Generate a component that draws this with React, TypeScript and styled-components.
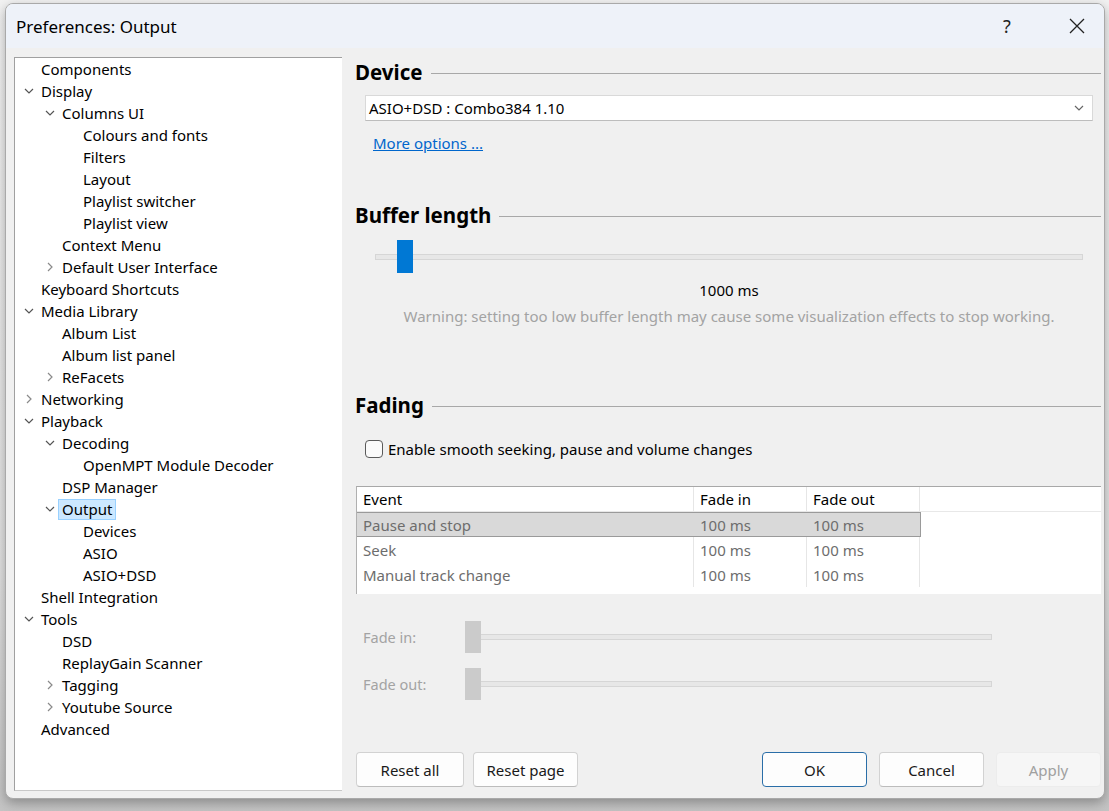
import styled, { createGlobalStyle } from "styled-components";

const GlobalStyle = createGlobalStyle`
  html, body {
    margin: 0;
    padding: 0;
    background: #e6e6e6;
  }
  body {
    font-family: "Noto Sans", "Open Sans", sans-serif;
    color: #000;
  }
`;

const Page = styled.div`
  width: 1109px;
  height: 811px;
  box-sizing: border-box;
  padding: 3px 4px 14px 5px;
  overflow: hidden;
  background: linear-gradient(#f2f2f2, #e2e2e2 70%, #c4c4c4);
`;

const Window = styled.div`
  height: 100%;
  display: flex;
  flex-direction: column;
  background: #f0f0f0;
  border: 1px solid #a9a9a9;
  border-radius: 8px;
  overflow: hidden;
  box-shadow: 0 4px 12px rgba(0, 0, 0, 0.3);
`;

const TitleBar = styled.div`
  height: 44px;
  flex: none;
  display: flex;
  align-items: center;
  background: #eef2f9;
  padding-left: 10px;
`;

const Title = styled.div`
  flex: 1;
  font-size: 17px;
`;

const TitleButton = styled.div<{ $w: number }>`
  width: ${(p) => p.$w}px;
  height: 44px;
  display: flex;
  align-items: center;
  justify-content: center;
  font-size: 18px;
  color: #222;
`;

const Body = styled.div`
  flex: 1;
  display: flex;
  padding: 9px 0 7px 8px;
  min-height: 0;
`;

const Tree = styled.div`
  width: 327px;
  flex: none;
  background: #fff;
  border-left: 1px solid #a0a0a0;
  border-top: 1px solid #a0a0a0;
  border-bottom: 1px solid #c8c8c8;
  font-size: 15px;
`;

const TreeRow = styled.div<{ $level: number }>`
  height: 22px;
  display: flex;
  align-items: center;
  padding-left: ${(p) => 8 + p.$level * 21}px;
  white-space: nowrap;
`;

const Expander = styled.span`
  width: 12px;
  margin-right: 6px;
  display: flex;
  align-items: center;
  justify-content: center;
`;

const Label = styled.span<{ $selected?: boolean }>`
  ${(p) =>
    p.$selected
      ? `background: #cce8ff; border: 1px solid #99d1ff; padding: 0 3px; margin-left: -4px; line-height: 19px;`
      : ``}
`;

const Content = styled.div`
  flex: 1;
  display: flex;
  flex-direction: column;
  padding-left: 13px;
  padding-right: 3px;
`;

const Heading = styled.div<{ $top: number }>`
  margin-top: ${(p) => p.$top}px;
  height: 26px;
  display: flex;
  align-items: center;
  gap: 8px;
  font-weight: 700;
  font-size: 20.5px;
  &::after {
    content: "";
    flex: 1;
    height: 1px;
    background: #a8a8a8;
    margin-top: 2px;
  }
`;

const Select = styled.div`
  margin: 10px 8px 0 10px;
  height: 26px;
  box-sizing: border-box;
  display: flex;
  align-items: center;
  justify-content: space-between;
  padding: 0 8px 0 3px;
  background: #fff;
  border: 1px solid #d9d9d9;
  border-bottom-color: #bdbdbd;
  font-size: 15px;
`;

const Link = styled.a`
  margin: 12px 0 0 18px;
  height: 20px;
  line-height: 20px;
  color: #0066cc;
  text-decoration: underline;
  font-size: 15px;
  align-self: flex-start;
`;

const SliderWrap = styled.div<{ $top: number }>`
  margin: ${(p) => p.$top}px 18px 0 20px;
  height: 33px;
  position: relative;
  display: flex;
  align-items: center;
`;

const Track = styled.div`
  flex: 1;
  height: 6px;
  box-sizing: border-box;
  background: #e7e7e7;
  border: 1px solid #d6d6d6;
`;

const Thumb = styled.div<{ $color: string; $h: number }>`
  position: absolute;
  top: 0;
  width: 16px;
  height: ${(p) => p.$h}px;
  background: ${(p) => p.$color};
`;

const Value = styled.div`
  margin: 7px 18px 0 20px;
  height: 20px;
  line-height: 20px;
  text-align: center;
  font-size: 15px;
`;

const Warning = styled.div`
  margin: 6px 18px 0 20px;
  height: 20px;
  line-height: 20px;
  text-align: center;
  font-size: 15px;
  color: #a3a3a3;
  white-space: nowrap;
`;

const CheckRow = styled.label`
  margin: 21px 0 0 10px;
  height: 20px;
  display: flex;
  align-items: center;
  gap: 5px;
  font-size: 15px;
`;

const CheckBox = styled.span`
  width: 18px;
  height: 18px;
  box-sizing: border-box;
  border: 1px solid #5a5a5a;
  border-radius: 4px;
  background: #fafafa;
`;

const Table = styled.div`
  margin: 27px 0 0 1px;
  height: 107px;
  background: #fff;
  border-top: 1px solid #a8a8a8;
  border-left: 1px solid #b0b0b0;
  font-size: 15px;
`;

const Row = styled.div<{ $head?: boolean }>`
  height: 25px;
  box-sizing: border-box;
  display: grid;
  grid-template-columns: 337px 113px 113px 1fr;
  color: ${(p) => (p.$head ? "#000" : "#6d6d6d")};
  border-bottom: ${(p) => (p.$head ? "1px solid #e8e8e8" : "none")};
`;

const Cell = styled.div<{ $selected?: boolean; $last?: boolean }>`
  display: flex;
  align-items: center;
  padding-left: 6px;
  border-right: ${(p) => (p.$last ? "none" : "1px solid #e6e6e6")};
  white-space: nowrap;
  ${(p) =>
    p.$selected
      ? `background: #d9d9d9; border-right: none; border-top: 1px solid #9a9a9a; border-bottom: 1px solid #9a9a9a;`
      : ``}
`;

const SelEnd = styled.div`
  border-left: 1px solid #9a9a9a;
`;

const FadeRow = styled.div<{ $top: number }>`
  margin: ${(p) => p.$top}px 0 0 8px;
  height: 32px;
  display: flex;
  align-items: center;
`;

const FadeLabel = styled.div`
  width: 102px;
  font-size: 14.5px;
  color: #a3a3a3;
`;

const FadeSlider = styled.div`
  width: 527px;
  height: 32px;
  position: relative;
  display: flex;
  align-items: center;
`;

const Buttons = styled.div`
  margin: 52px 0 0 1px;
  height: 35px;
  display: flex;
  gap: 9px;
`;

const Spacer = styled.div`
  flex: 1;
`;

const Button = styled.button<{ $w: number; $primary?: boolean; $disabled?: boolean }>`
  width: ${(p) => p.$w}px;
  height: 35px;
  border-radius: 4px;
  font-family: inherit;
  font-size: 15px;
  background: ${(p) => (p.$disabled ? "#f6f6f6" : "#fdfdfd")};
  color: ${(p) => (p.$disabled ? "#a0a0a0" : "#1a1a1a")};
  border: 1px solid ${(p) => (p.$primary ? "#2a6ea8" : p.$disabled ? "#ececec" : "#d2d2d2")};
  border-bottom-color: ${(p) => (p.$primary ? "#2a6ea8" : p.$disabled ? "#ececec" : "#bcbcbc")};
  padding: 0;
`;

const Down = ({ color = "#555" }: { color?: string }) => (
  <svg width="10" height="6" viewBox="0 0 10 6">
    <path d="M1 1 L5 5 L9 1" fill="none" stroke={color} strokeWidth="1.2" />
  </svg>
);

const Right = () => (
  <svg width="6" height="10" viewBox="0 0 6 10">
    <path d="M1 1 L5 5 L1 9" fill="none" stroke="#8a8a8a" strokeWidth="1.2" />
  </svg>
);

type Node = { label: string; level: number; exp?: "open" | "closed"; selected?: boolean };

const nodes: Node[] = [
  { label: "Components", level: 0 },
  { label: "Display", level: 0, exp: "open" },
  { label: "Columns UI", level: 1, exp: "open" },
  { label: "Colours and fonts", level: 2 },
  { label: "Filters", level: 2 },
  { label: "Layout", level: 2 },
  { label: "Playlist switcher", level: 2 },
  { label: "Playlist view", level: 2 },
  { label: "Context Menu", level: 1 },
  { label: "Default User Interface", level: 1, exp: "closed" },
  { label: "Keyboard Shortcuts", level: 0 },
  { label: "Media Library", level: 0, exp: "open" },
  { label: "Album List", level: 1 },
  { label: "Album list panel", level: 1 },
  { label: "ReFacets", level: 1, exp: "closed" },
  { label: "Networking", level: 0, exp: "closed" },
  { label: "Playback", level: 0, exp: "open" },
  { label: "Decoding", level: 1, exp: "open" },
  { label: "OpenMPT Module Decoder", level: 2 },
  { label: "DSP Manager", level: 1 },
  { label: "Output", level: 1, exp: "open", selected: true },
  { label: "Devices", level: 2 },
  { label: "ASIO", level: 2 },
  { label: "ASIO+DSD", level: 2 },
  { label: "Shell Integration", level: 0 },
  { label: "Tools", level: 0, exp: "open" },
  { label: "DSD", level: 1 },
  { label: "ReplayGain Scanner", level: 1 },
  { label: "Tagging", level: 1, exp: "closed" },
  { label: "Youtube Source", level: 1, exp: "closed" },
  { label: "Advanced", level: 0 },
];

const fades = [
  { event: "Pause and stop", fin: "100 ms", fout: "100 ms", selected: true },
  { event: "Seek", fin: "100 ms", fout: "100 ms" },
  { event: "Manual track change", fin: "100 ms", fout: "100 ms" },
];

export default function App() {
  return (
    <Page>
      <GlobalStyle />
      <Window>
        <TitleBar>
          <Title>Preferences: Output</Title>
          <TitleButton $w={86}>?</TitleButton>
          <TitleButton $w={54}>
            <svg width="16" height="16" viewBox="0 0 16 16">
              <path d="M1 1 L15 15 M15 1 L1 15" stroke="#222" strokeWidth="1.3" />
            </svg>
          </TitleButton>
        </TitleBar>
        <Body>
          <Tree>
            {nodes.map((n) => (
              <TreeRow key={n.label} $level={n.level}>
                <Expander>
                  {n.exp === "open" && <Down />}
                  {n.exp === "closed" && <Right />}
                </Expander>
                <Label $selected={n.selected}>{n.label}</Label>
              </TreeRow>
            ))}
          </Tree>
          <Content>
            <Heading $top={2}>Device</Heading>
            <Select>
              ASIO+DSD : Combo384 1.10
              <Down color="#666" />
            </Select>
            <Link>More options ...</Link>

            <Heading $top={49}>Buffer length</Heading>
            <SliderWrap $top={12}>
              <Track />
              <Thumb $color="#0078d4" $h={33} style={{ left: 22 }} />
            </SliderWrap>
            <Value>1000 ms</Value>
            <Warning>
              Warning: setting too low buffer length may cause some visualization effects to stop working.
            </Warning>

            <Heading $top={66}>Fading</Heading>
            <CheckRow>
              <CheckBox />
              Enable smooth seeking, pause and volume changes
            </CheckRow>
            <Table>
              <Row $head>
                <Cell>Event</Cell>
                <Cell>Fade in</Cell>
                <Cell>Fade out</Cell>
                <Cell $last />
              </Row>
              {fades.map((f) => (
                <Row key={f.event}>
                  <Cell $selected={f.selected}>{f.event}</Cell>
                  <Cell $selected={f.selected}>{f.fin}</Cell>
                  <Cell $selected={f.selected}>{f.fout}</Cell>
                  {f.selected ? <SelEnd /> : <Cell $last />}
                </Row>
              ))}
            </Table>

            <FadeRow $top={27}>
              <FadeLabel>Fade in:</FadeLabel>
              <FadeSlider>
                <Track />
                <Thumb $color="#cbcbcb" $h={32} style={{ left: 0 }} />
              </FadeSlider>
            </FadeRow>
            <FadeRow $top={15}>
              <FadeLabel>Fade out:</FadeLabel>
              <FadeSlider>
                <Track />
                <Thumb $color="#cbcbcb" $h={32} style={{ left: 0 }} />
              </FadeSlider>
            </FadeRow>

            <Buttons>
              <Button $w={108}>Reset all</Button>
              <Button $w={105}>Reset page</Button>
              <Spacer />
              <Button $w={105} $primary>OK</Button>
              <Button $w={105} style={{ marginLeft: 3 }}>Cancel</Button>
              <Button $w={105} $disabled style={{ marginLeft: 3 }}>Apply</Button>
            </Buttons>
          </Content>
        </Body>
      </Window>
    </Page>
  );
}
